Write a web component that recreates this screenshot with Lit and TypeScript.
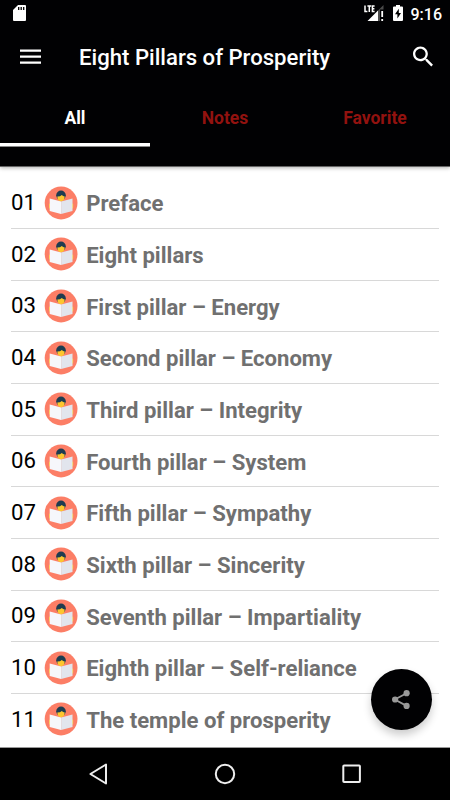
import { LitElement, html, css } from "lit";
import { customElement, property } from "lit/decorators.js";

const CHAPTERS = [
  "Preface",
  "Eight pillars",
  "First pillar – Energy",
  "Second pillar – Economy",
  "Third pillar – Integrity",
  "Fourth pillar – System",
  "Fifth pillar – Sympathy",
  "Sixth pillar – Sincerity",
  "Seventh pillar – Impartiality",
  "Eighth pillar – Self-reliance",
  "The temple of prosperity",
];

@customElement("status-bar")
class StatusBar extends LitElement {
  static styles = css`
    :host {
      display: flex;
      align-items: center;
      height: 26px;
      padding: 0 8px 0 13px;
      box-sizing: border-box;
      font-size: 16px;
      font-weight: 500;
    }
    svg { display: block; }
    .card { margin-right: auto; }
    .battery { margin: 0 8px 0 9px; }
    .time { line-height: 28px; padding-top: 3px; }
  `;
  render() {
    return html`
      <svg class="card" width="13" height="16" viewBox="0 0 13 16">
        <path fill="#fff" d="M5 0H12Q13 0 13 1V15Q13 16 12 16H1Q0 16 0 15V5Z" />
        <path stroke="#000" stroke-width="1.3" d="M5.7 2v3M8.2 2v3M10.7 2v3" />
      </svg>
      <svg width="20" height="16" viewBox="0 0 20 16">
        <path fill="#4c4c4c" d="M19.5 0V4.5H16V16H13V6.5Z" />
        <path fill="#fff" d="M14 5.5V16H3.5Z" />
        <path fill="none" stroke="#fff" stroke-width="1.5" d="M1 .4V6.4H3.4M3.4 1.1H7.2M5.3 1.1V7.1M10.6 1.1H8.4V6.4H10.6M8.2 3.8H10.4" />
        <path fill="#fff" d="M17.3 6h1.8v6h-1.8zM17.3 14h1.8v2h-1.8z" />
      </svg>
      <svg class="battery" width="10" height="16" viewBox="0 0 10 16">
        <path fill="#fff" d="M3 0H7V1.5H9Q10 1.5 10 2.5V15Q10 16 9 16H1Q0 16 0 15V2.5Q0 1.5 1 1.5H3Z" />
        <path fill="#000" d="M5.8 3.8 2 9.3H4.4V13.5L8 8H5.8Z" />
      </svg>
      <span class="time">9:16</span>
    `;
  }
}

@customElement("reader-icon")
class ReaderIcon extends LitElement {
  static styles = css`
    :host, svg { display: block; width: 34px; height: 34px; }
  `;
  render() {
    return html`
      <svg viewBox="0 0 34 34">
        <circle cx="17.1" cy="17" r="16.4" fill="#fc7e66" />
        <path fill="#fdc62f" d="M5 18.2Q5 17.4 6.2 17.4V22.8Q5 22.5 5 21.6ZM29.2 18.2Q29.2 17.4 28 17.4V22.8Q29.2 22.5 29.2 21.6Z" />
        <circle cx="17" cy="9.3" r="4.8" fill="#1e3c50" />
        <path fill="#fdc62f" d="M13.3 10.6Q16.4 10.6 17.8 9Q19 10.4 20.7 10.6Q20.6 15 17 15.4Q13.4 15 13.3 10.6Z" />
        <path fill="#f6f7fb" d="M5.7 12.6 17.1 15.4V28L5.7 24.9Z" />
        <path fill="#e2e5ed" d="M28.5 12.6 17.1 15.4V28L28.5 24.9Z" />
      </svg>
    `;
  }
}

@customElement("chapter-row")
class ChapterRow extends LitElement {
  @property({ type: Number }) index = 0;
  @property() label = "";
  static styles = css`
    :host {
      display: flex;
      align-items: center;
      height: 51.67px;
      box-sizing: border-box;
      border-bottom: 1px solid #d8d8d8;
      line-height: 28px;
      white-space: nowrap;
    }
    :host(:last-child) { border-bottom-color: transparent; }
    .num { width: 33px; padding-bottom: 1.2px; font-size: 22.2px; color: #000; }
    .label { margin-left: 8.2px; padding-top: 1.2px; font-size: 22.1px; font-weight: 700; color: #707070; }
  `;
  render() {
    return html`
      <span class="num">${String(this.index).padStart(2, "0")}</span>
      <reader-icon></reader-icon>
      <span class="label">${this.label}</span>
    `;
  }
}

@customElement("app-root")
class AppRoot extends LitElement {
  static styles = css`
    :host {
      position: relative;
      display: flex;
      flex-direction: column;
      width: 450px;
      height: 800px;
      overflow: hidden;
      background: #fff;
      color: #fff;
      font-family: Roboto, sans-serif;
    }
    svg { display: block; overflow: visible; }
    header {
      position: relative;
      z-index: 1;
      height: 167px;
      flex: none;
      background: #010103;
      border-bottom: 1px solid #666;
      box-sizing: border-box;
      box-shadow: 0 1px 4px rgba(0, 0, 0, 0.3);
    }
    .toolbar {
      display: flex;
      align-items: center;
      height: 61px;
      padding: 0 17px 0 20px;
    }
    h1 {
      flex: 1;
      margin: 0 0 0 38px;
      padding-top: 1px;
      font-size: 22.15px;
      line-height: 28px;
      font-weight: 500;
      white-space: nowrap;
    }
    .tabs { display: grid; grid-template-columns: repeat(3, 1fr); }
    .tab {
      height: 60px;
      box-sizing: border-box;
      border-bottom: 4px solid transparent;
      text-align: center;
      font-size: 17.5px;
      line-height: 62px;
      font-weight: 700;
      color: #92120f;
    }
    .active {
      color: #fff;
      border-bottom: 1px solid #888;
      box-shadow: inset 0 -3px #fff;
    }
    .list {
      flex: 1;
      min-height: 0;
      overflow: hidden;
      padding: 10.4px 11px 0;
    }
    .fab {
      position: absolute;
      right: 18px;
      bottom: 70px;
      width: 61px;
      height: 61px;
      display: grid;
      place-items: center;
      border-radius: 50%;
      background: #010103;
      box-shadow: 0 5px 9px rgba(0, 0, 0, 0.2);
    }
    nav {
      display: flex;
      justify-content: space-between;
      align-items: center;
      height: 53px;
      flex: none;
      box-sizing: border-box;
      padding: 0 88px;
      background: #000;
      border-top: 1px solid #999;
    }
  `;
  render() {
    return html`
      <header>
        <status-bar></status-bar>
        <div class="toolbar">
          <svg width="21" height="16" viewBox="0 0 21 16">
            <path stroke="#fff" stroke-width="2.2" d="M0 1.6H21M0 7.6H21M0 13.6H21" />
          </svg>
          <h1>Eight Pillars of Prosperity</h1>
          <svg width="20" height="20" viewBox="3 3.5 17.5 17.5">
            <path fill="#fff" d="M15.5 14h-.79l-.28-.27C15.41 12.59 16 11.11 16 9.5 16 5.91 13.09 3 9.5 3S3 5.91 3 9.5 5.91 16 9.5 16c1.61 0 3.09-.59 4.23-1.57l.27.28v.79l5 4.99L20.49 19l-4.99-5zm-6 0C7.01 14 5 11.99 5 9.5S7.01 5 9.5 5 14 7.01 14 9.5 11.99 14 9.5 14z" />
          </svg>
        </div>
        <div class="tabs">
          <div class="tab active">All</div>
          <div class="tab">Notes</div>
          <div class="tab">Favorite</div>
        </div>
      </header>
      <div class="list">
        ${CHAPTERS.map((c, i) => html`<chapter-row .index=${i + 1} .label=${c}></chapter-row>`)}
      </div>
      <div class="fab">
        <svg width="19" height="20" viewBox="0 0 19 20">
          <path fill="none" stroke="#999" stroke-width="1.8" d="M14.6 3.2 2.8 9.5 14.6 15.9" />
          <g fill="#999">
            <circle cx="14.6" cy="3.2" r="3.1" />
            <circle cx="3.1" cy="9.5" r="3.1" />
            <circle cx="14.6" cy="15.9" r="3.1" />
          </g>
        </svg>
      </div>
      <nav>
        <svg width="20" height="22" viewBox="0 0 20 22">
          <path fill="none" stroke="#eee" stroke-width="2" stroke-linejoin="round" d="M18 1.5V20.5L2.4 11Z" />
        </svg>
        <svg width="22" height="22" viewBox="0 0 22 22">
          <circle cx="11" cy="11" r="9.2" fill="none" stroke="#eee" stroke-width="2" />
        </svg>
        <svg width="20" height="20" viewBox="0 0 20 20">
          <rect x="1.3" y="1.5" width="16.6" height="16.6" rx=".8" fill="none" stroke="#eee" stroke-width="2" />
        </svg>
      </nav>
    `;
  }
}
